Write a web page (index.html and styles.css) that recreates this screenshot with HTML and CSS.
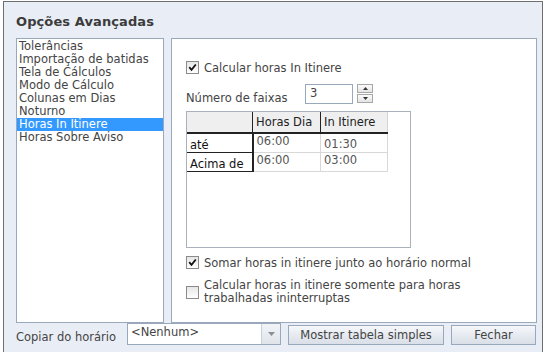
FILE: index.html
```html
<!DOCTYPE html>
<html lang="pt">
<head>
  <meta charset="UTF-8">
  <title>Opções Avançadas</title>
  <link rel="stylesheet" href="styles.css">
</head>
<body>
  <div class="dialog">
    <h1 class="title">Opções Avançadas</h1>

    <div class="content">
      <ul class="option-list">
        <li>Tolerâncias</li>
        <li>Importação de batidas</li>
        <li>Tela de Cálculos</li>
        <li>Modo de Cálculo</li>
        <li>Colunas em Dias</li>
        <li>Noturno</li>
        <li class="selected">Horas In Itinere</li>
        <li>Horas Sobre Aviso</li>
      </ul>

      <div class="panel">
        <label class="check top-check">
          <span class="box">
            <svg width="9" height="9" viewBox="0 0 9 9"><path d="M1.2 4.2 L3.5 6.8 L7.8 1.5" fill="none" stroke="#111" stroke-width="1.8"/></svg>
          </span>
          Calcular horas In Itinere
        </label>

        <div class="faixas">
          <span>Número de faixas</span>
          <span class="num-input">3</span>
          <span class="spinner">
            <span class="spin-btn"><svg width="5" height="3" viewBox="0 0 5 3"><path d="M0 3 L2.5 0 L5 3Z" fill="#333"/></svg></span>
            <span class="spin-btn"><svg width="5" height="3" viewBox="0 0 5 3"><path d="M0 0 L2.5 3 L5 0Z" fill="#333"/></svg></span>
          </span>
        </div>

        <div class="grid">
          <table>
            <tr class="head">
              <th class="corner"></th>
              <th>Horas Dia</th>
              <th>In Itinere</th>
            </tr>
            <tr>
              <th class="row-head">até</th>
              <td>06:00</td>
              <td class="low">01:30</td>
            </tr>
            <tr>
              <th class="row-head">Acima de</th>
              <td>06:00</td>
              <td>03:00</td>
            </tr>
          </table>
        </div>

        <label class="check">
          <span class="box">
            <svg width="9" height="9" viewBox="0 0 9 9"><path d="M1.2 4.2 L3.5 6.8 L7.8 1.5" fill="none" stroke="#111" stroke-width="1.8"/></svg>
          </span>
          Somar horas in itinere junto ao horário normal
        </label>
        <label class="check multi">
          <span class="box empty"></span>
          <span>Calcular horas in itinere somente para horas<br>trabalhadas ininterruptas</span>
        </label>
      </div>
    </div>

    <div class="footer">
      <span class="footer-label">Copiar do horário</span>
      <span class="combo">
        <span class="combo-text">&lt;Nenhum&gt;</span>
        <span class="combo-arrow"><svg width="7" height="4" viewBox="0 0 7 4"><path d="M0 0 L3.5 4 L7 0Z" fill="#8a8f96"/></svg></span>
      </span>
      <button class="btn wide">Mostrar tabela simples</button>
      <button class="btn">Fechar</button>
    </div>
  </div>
</body>
</html>
```

FILE: styles.css
```css
html, body {
  margin: 0;
  padding: 0;
  background: #ffffff;
  font-family: 'DejaVu Sans', Verdana, sans-serif;
  font-size: 11.5px;
  color: #444444;
}

.dialog {
  margin: 1px 0 0 3px;
  width: 540px;
  height: 351px;
  box-sizing: border-box;
  border: 1px solid #6e6e6e;
  border-bottom: none;
  background: #e9eef6;
  padding: 0 0 0 12px;
}

.title {
  margin: 0;
  padding: 12px 0 0 0;
  height: 24px;
  font-size: 13px;
  font-weight: bold;
  color: #3c3c3c;
  letter-spacing: 0.1px;
}

.content {
  display: flex;
  gap: 7px;
  height: 285px;
}

.option-list {
  list-style: none;
  margin: 0;
  padding: 1px 0 0 0;
  width: 148px;
  box-sizing: border-box;
  background: #ffffff;
  border: 1px solid #9aa8bb;
}

.option-list li {
  height: 13px;
  line-height: 13px;
  padding-left: 2px;
  white-space: nowrap;
}

.option-list li.selected {
  background: #3399ff;
  color: #ffffff;
}

.panel {
  width: 366px;
  box-sizing: border-box;
  background: #ffffff;
  border: 1px solid #9aa8bb;
  padding: 22px 0 0 14px;
}

.check {
  display: flex;
  align-items: center;
  gap: 5px;
  height: 13px;
}

.box {
  width: 11px;
  height: 11px;
  border: 1px solid #8b8b8b;
  background: linear-gradient(#e6e6e6, #ffffff);
  display: flex;
  align-items: center;
  justify-content: center;
  flex-shrink: 0;
}

.top-check {
  margin-bottom: 9px;
}

.faixas {
  display: flex;
  align-items: center;
  height: 21px;
}

.faixas > span:first-child {
  width: 119px;
  padding-top: 8px;
}

.num-input {
  width: 48px;
  height: 20px;
  box-sizing: border-box;
  border: 1px solid #9aa8bb;
  padding-left: 4px;
  line-height: 16px;
}

.spinner {
  display: flex;
  flex-direction: column;
  gap: 1px;
  margin-left: 4px;
}

.spin-btn {
  width: 16px;
  height: 9px;
  box-sizing: border-box;
  border: 1px solid #a8a8a8;
  background: linear-gradient(#fbfbfb, #e4e4e4);
  display: flex;
  align-items: center;
  justify-content: center;
}

.grid {
  margin-top: 7px;
  width: 225px;
  height: 137px;
  box-sizing: border-box;
  border: 1px solid #a9b1ba;
  margin-bottom: 8px;
}

table {
  border-collapse: collapse;
}

th, td {
  font-weight: normal;
  text-align: left;
  padding: 0 3px;
  white-space: nowrap;
}

.head th {
  height: 20px;
  background: #efefef;
  color: #222222;
  border-right: 1px solid #222222;
  border-bottom: 2px solid #222222;
}

.head th:last-child {
  border-right: 1px solid #d4d4d4;
}

.head th.corner {
  width: 59px;
}

.head th:nth-child(2) {
  width: 61px;
}

.head th:nth-child(3) {
  width: 60px;
}

.row-head {
  height: 17px;
  color: #111111;
  background: #ffffff;
  border-right: 2px solid #222222;
  border-bottom: 1px solid #222222;
  padding-top: 1px;
  vertical-align: bottom;
}

td {
  color: #555555;
  border-right: 1px solid #d8d8d8;
  border-bottom: 1px solid #d8d8d8;
  vertical-align: top;
  padding-top: 0;
}

td.low {
  padding-top: 3px;
}

.check.multi {
  margin-top: 10px;
  height: 26px;
  line-height: 13px;
}

.footer {
  display: flex;
  align-items: center;
  height: 24px;
}

.footer-label {
  width: 111px;
  padding-top: 4px;
}

.combo {
  display: flex;
  width: 154px;
  height: 22px;
  box-sizing: border-box;
  border: 1px solid #9aa8bb;
  background: #ffffff;
  margin-top: -2px;
}

.combo-text {
  flex: 1;
  padding-left: 3px;
  line-height: 17px;
}

.combo-arrow {
  width: 18px;
  border-left: 1px solid #c8d0da;
  background: linear-gradient(#f2f4f7, #dfe4ea);
  display: flex;
  align-items: center;
  justify-content: center;
}

.btn {
  margin-left: 7px;
  width: 85px;
  height: 20px;
  box-sizing: border-box;
  border: 1px solid #9aa8bb;
  background: linear-gradient(#f5f7fa 0%, #e7ebf1 50%, #d9dfe8 100%);
  font-family: 'DejaVu Sans', Verdana, sans-serif;
  font-size: 11.5px;
  color: #444444;
  padding: 0;
  margin-top: -1px;
}

.btn.wide {
  width: 156px;
}
```
